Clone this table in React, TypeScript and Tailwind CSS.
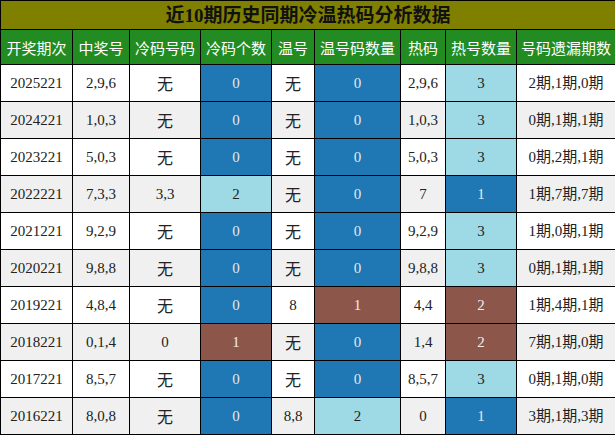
const headers = ['开奖期次', '中奖号', '冷码号码', '冷码个数', '温号', '温号码数量', '热码', '热号数量', '号码遗漏期数']
const widths = ['w-[72px]', 'w-[57px]', 'w-[71px]', 'w-[71px]', 'w-[43px]', 'w-[86px]', 'w-[45px]', 'w-[71px]', 'w-[99px]']

type Row = [string, string, string, string, string, string, string, string, string]

const rows: Row[] = [
  ['2025221', '2,9,6', '无', '0', '无', '0', '2,9,6', '3', '2期,1期,0期'],
  ['2024221', '1,0,3', '无', '0', '无', '0', '1,0,3', '3', '0期,1期,1期'],
  ['2023221', '5,0,3', '无', '0', '无', '0', '5,0,3', '3', '0期,2期,1期'],
  ['2022221', '7,3,3', '3,3', '2', '无', '0', '7', '1', '1期,7期,7期'],
  ['2021221', '9,2,9', '无', '0', '无', '0', '9,2,9', '3', '1期,0期,1期'],
  ['2020221', '9,8,8', '无', '0', '无', '0', '9,8,8', '3', '0期,1期,1期'],
  ['2019221', '4,8,4', '无', '0', '8', '1', '4,4', '2', '1期,4期,1期'],
  ['2018221', '0,1,4', '0', '1', '无', '0', '1,4', '2', '7期,1期,0期'],
  ['2017221', '8,5,7', '无', '0', '无', '0', '8,5,7', '3', '0期,1期,0期'],
  ['2016221', '8,0,8', '无', '0', '8,8', '2', '0', '1', '3期,1期,3期'],
]

// colour of count cells follows the value
const countCell = (v: string, col: number) => {
  if (col === 7) {
    if (v === '3') return 'bg-[#9edae5] text-[#222]'
    if (v === '2') return 'bg-[#8c564b] text-[#eee]'
    return 'bg-[#1f77b4] text-[#e8e8e8]'
  }
  if (v === '0') return 'bg-[#1f77b4] text-[#e8e8e8]'
  if (v === '1') return 'bg-[#8c564b] text-[#eee]'
  return 'bg-[#9edae5] text-[#222]'
}

const App = () => {
  return (
    <div className="w-[615px] h-[435px] bg-white" style={{ fontFamily: '"Liberation Serif", "Noto Sans CJK SC", serif' }}>
      <table className="w-[615px] border-collapse table-fixed">
        <colgroup>
          {widths.map((w, i) => (
            <col key={i} className={w} />
          ))}
        </colgroup>
        <thead>
          <tr className="h-[29px]">
            <th
              colSpan={9}
              className="border border-black bg-[#808000] text-[#111] text-[19px] font-bold text-center p-0 leading-none"
              style={{ fontFamily: '"Liberation Serif", "Noto Sans CJK SC", sans-serif' }}
            >
              近10期历史同期冷温热码分析数据
            </th>
          </tr>
          <tr className="h-[35px]">
            {headers.map((h) => (
              <th
                key={h}
                className="border border-black bg-[#228b22] text-white text-[15px] font-normal text-center p-0 whitespace-nowrap leading-none"
                style={{ fontFamily: '"Noto Sans CJK SC", sans-serif' }}
              >
                {h}
              </th>
            ))}
          </tr>
        </thead>
        <tbody>
          {rows.map((r, ri) => (
            <tr key={r[0]} className={`h-[37px] ${ri % 2 === 1 ? 'bg-[#f0f0f0]' : 'bg-white'}`}>
              {r.map((c, ci) => {
                const isCount = ci === 3 || ci === 5 || ci === 7
                const isWu = c === '无'
                return (
                  <td
                    key={ci}
                    className={`border border-black text-center p-0 whitespace-nowrap leading-none ${isCount ? countCell(c, ci) : 'text-[#222]'} ${isWu ? 'text-[16px] text-[#111]' : 'text-[15px]'}`}
                    style={isWu ? { fontFamily: '"Noto Sans CJK SC", sans-serif' } : undefined}
                  >
                    {c}
                  </td>
                )
              })}
            </tr>
          ))}
        </tbody>
      </table>
    </div>
  )
}

export default App
